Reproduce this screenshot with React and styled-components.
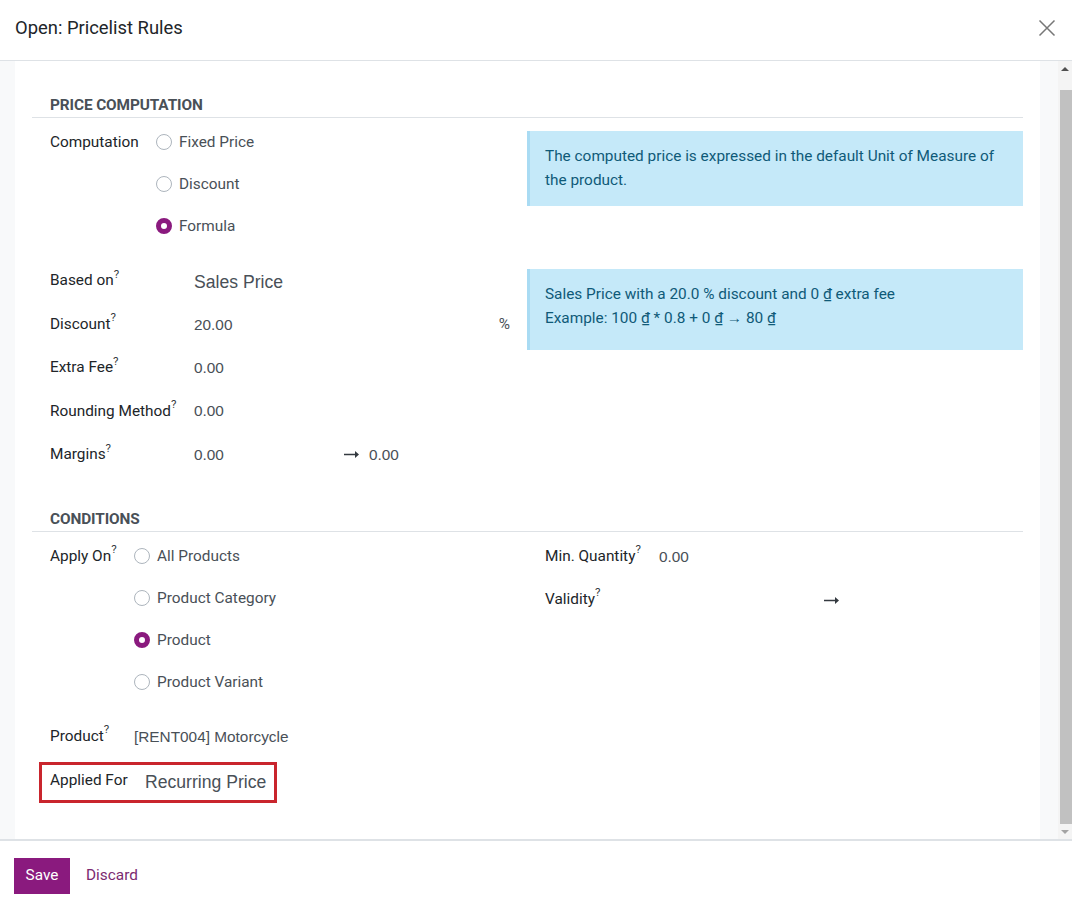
import React from "react"
import styled, { createGlobalStyle } from "styled-components"

const GlobalStyle = createGlobalStyle`
  html, body {
    margin: 0;
    padding: 0;
    background: #fff;
  }
  body {
    font-family: Roboto, "Liberation Sans", sans-serif;
    font-size: 15.36px;
    color: #212529;
  }
`

const Page = styled.div`
  width: 1072px;
  height: 908px;
  display: flex;
  flex-direction: column;
  overflow: hidden;
`

const Header = styled.header`
  height: 61px;
  box-sizing: border-box;
  flex: none;
  display: flex;
  align-items: center;
  justify-content: space-between;
  padding: 0 15px 4px;
  border-bottom: 1px solid #dee2e6;
`

const Title = styled.h4`
  margin: 0;
  font-size: 18.4px;
  font-weight: 400;
  line-height: 24px;
  color: #212529;
`

const Close = styled.button`
  width: 18px;
  height: 18px;
  padding: 0;
  border: 0;
  background: none;
  color: #777;
  display: flex;
  margin-right: 1px;
`

const Body = styled.main`
  height: 780px;
  box-sizing: border-box;
  flex: none;
  display: flex;
  background: #f8f9fa;
  padding-left: 15px;
  border-bottom: 2px solid #dee2e6;
`

const Sheet = styled.div`
  width: 1025px;
  box-sizing: border-box;
  flex: none;
  background: #fff;
  padding: 33px 17px 0;
`

const Scrollbar = styled.div`
  width: 14px;
  margin-left: auto;
  display: flex;
  flex-direction: column;
  align-items: flex-end;
  background: #f4f4f4;
`

const ScrollArrow = styled.div`
  width: 14px;
  height: ${p => p.$height}px;
  flex: none;
  display: flex;
  align-items: center;
  justify-content: center;

  &::after {
    content: "";
    border-left: 4px solid transparent;
    border-right: 4px solid transparent;
    ${p => (p.$down ? "border-top: 4px solid #a3a3a3;" : "border-bottom: 4px solid #505050;")}
  }
`

const ScrollThumb = styled.div`
  width: 12px;
  flex: 1;
  margin-top: 13px;
  background: #c1c1c1;
`

const SectionTitle = styled.div`
  height: 24px;
  box-sizing: border-box;
  padding-left: 18px;
  margin-top: ${p => p.$top || 0}px;
  font-size: 15.36px;
  font-weight: 700;
  line-height: 22px;
  color: #495057;
  border-bottom: 1px solid #dee2e6;
  letter-spacing: -0.1px;
`

const Group = styled.div`
  display: grid;
  grid-template-columns: 495px 496px;
  align-items: start;
  margin-top: ${p => p.$top}px;
`

const Stack = styled.div`
  display: flex;
  flex-direction: column;
  gap: ${p => p.$gap}px;
`

const Row = styled.div`
  display: flex;
  align-items: flex-start;
  min-height: 22px;
  margin-top: ${p => p.$top || 0}px;
  padding-left: 18px;
`

const Label = styled.div`
  width: ${p => p.$width}px;
  flex: none;
  line-height: 22px;
  color: #212529;
  white-space: nowrap;
`

const Help = styled.sup`
  font-size: 11.5px;
  line-height: 0;
  position: relative;
  top: -1px;
  vertical-align: super;
  color: #343a40;
`

const Value = styled.div`
  box-sizing: border-box;
  height: 22px;
  font-family: "Liberation Sans", Arial, sans-serif;
  font-size: ${p => p.$size || 15.36}px;
  line-height: 22px;
  color: #495057;
  padding-top: ${p => p.$drop ?? 1}px;
  white-space: nowrap;
`

const Percent = styled.div`
  margin-left: auto;
  margin-right: 17px;
  line-height: 22px;
  color: #495057;
`

const ArrowIcon = styled.svg`
  width: 15px;
  height: 7px;
  flex: none;
  margin: ${p => p.$margin};
  color: #343a40;
`

const Radios = styled.div`
  display: flex;
  flex-direction: column;
  gap: 20px;
`

const Radio = styled.div`
  display: flex;
  align-items: center;
  height: 22px;
  gap: 7px;
  color: #495057;
`

const Dot = styled.span`
  width: 16px;
  height: 16px;
  box-sizing: border-box;
  flex: none;
  border-radius: 50%;
  border: ${p => (p.$checked ? "5px solid #8a1a7e" : "1px solid #adb5bd")};
  background: #fff;
`

const Alert = styled.div`
  box-sizing: border-box;
  height: ${p => p.$height}px;
  padding: 13px 15px 0;
  background: #c5e9f9;
  border-left: 3px solid #a9dbf3;
  color: #0f5a78;
  line-height: 24px;
`

const Applied = styled.div`
  display: flex;
  align-self: flex-start;
  box-sizing: border-box;
  height: 41px;
  margin: 15px 0 0 7px;
  padding: 0 8px;
  border: 3px solid #c9252d;
`

const AppliedLabel = styled(Label)`
  margin-top: 4px;
`

const AppliedValue = styled(Value)`
  margin-top: 6px;
  padding-top: 0;
`

const Footer = styled.footer`
  flex: 1;
  display: flex;
  align-items: flex-start;
  gap: 16px;
  padding: 17px 14px 0;
`

const SaveButton = styled.button`
  width: 56px;
  height: 36px;
  padding: 0 0 2px;
  border: 0;
  background: #8a1a7e;
  color: #fff;
  font-family: inherit;
  font-size: 15.36px;
`

const DiscardButton = styled.button`
  height: 36px;
  padding: 0 0 2px;
  border: 0;
  background: none;
  color: #7c2a70;
  font-family: inherit;
  font-size: 15.36px;
`

const Arrow = ({ margin }) => (
  <ArrowIcon $margin={margin} viewBox="0 0 15 7" aria-hidden="true">
    <path d="M0 2.7h11V0l4 3.5L11 7V4.3H0z" fill="currentColor" />
  </ArrowIcon>
)

const Options = ({ items, checked }) => (
  <Radios>
    {items.map(item => (
      <Radio key={item}>
        <Dot $checked={item === checked} />
        {item}
      </Radio>
    ))}
  </Radios>
)

export default function App() {
  return (
    <Page>
      <GlobalStyle />
      <Header>
        <Title>Open: Pricelist Rules</Title>
        <Close aria-label="Close">
          <svg width="18" height="18" viewBox="0 0 18 18">
            <path d="M1.5 1.5l15 15M16.5 1.5l-15 15" stroke="currentColor" strokeWidth="1.5" fill="none" />
          </svg>
        </Close>
      </Header>
      <Body>
        <Sheet>
          <SectionTitle>PRICE COMPUTATION</SectionTitle>
          <Group $top={13}>
            <Row>
              <Label $width={106}>Computation</Label>
              <Options items={["Fixed Price", "Discount", "Formula"]} checked="Formula" />
            </Row>
            <Alert $height={75}>
              The computed price is expressed in the default Unit of Measure of the product.
            </Alert>
          </Group>
          <Group $top={32}>
            <Stack $gap={21.5}>
              <Row>
                <Label $width={144}>Based on<Help>?</Help></Label>
                <Value $size={17.6} $drop={2}>Sales Price</Value>
              </Row>
              <Row>
                <Label $width={144}>Discount<Help>?</Help></Label>
                <Value>20.00</Value>
                <Percent>%</Percent>
              </Row>
              <Row>
                <Label $width={144}>Extra Fee<Help>?</Help></Label>
                <Value>0.00</Value>
              </Row>
              <Row>
                <Label $width={144}>Rounding Method<Help>?</Help></Label>
                <Value $drop={0}>0.00</Value>
              </Row>
              <Row>
                <Label $width={144}>Margins<Help>?</Help></Label>
                <Value>0.00</Value>
                <Arrow margin="8px 10px 0 120px" />
                <Value>0.00</Value>
              </Row>
            </Stack>
            <Alert $height={81}>
              Sales Price with a 20.0 % discount and 0 ₫ extra fee
              <br />
              Example: 100 ₫ * 0.8 + 0 ₫ → 80 ₫
            </Alert>
          </Group>
          <SectionTitle $top={42.5}>CONDITIONS</SectionTitle>
          <Group $top={13}>
            <Row>
              <Label $width={84}>Apply On<Help>?</Help></Label>
              <Options
                items={["All Products", "Product Category", "Product", "Product Variant"]}
                checked="Product"
              />
            </Row>
            <Stack $gap={21}>
              <Row>
                <Label $width={114}>Min. Quantity<Help>?</Help></Label>
                <Value>0.00</Value>
              </Row>
              <Row>
                <Label $width={279}>Validity<Help>?</Help></Label>
                <Arrow margin="9px 0 0 0" />
              </Row>
            </Stack>
          </Group>
          <Stack $gap={0}>
            <Row $top={32}>
              <Label $width={84}>Product<Help>?</Help></Label>
              <Value>[RENT004] Motorcycle</Value>
            </Row>
            <Applied>
              <AppliedLabel $width={95}>Applied For</AppliedLabel>
              <AppliedValue $size={17.6}>Recurring Price</AppliedValue>
            </Applied>
          </Stack>
        </Sheet>
        <Scrollbar>
          <ScrollArrow $height={16} />
          <ScrollThumb />
          <ScrollArrow $height={15} $down />
        </Scrollbar>
      </Body>
      <Footer>
        <SaveButton>Save</SaveButton>
        <DiscardButton>Discard</DiscardButton>
      </Footer>
    </Page>
  )
}
